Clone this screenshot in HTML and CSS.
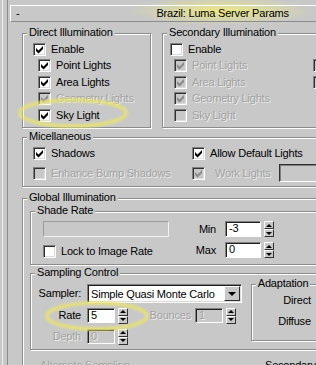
FILE: index.html
```html
<!DOCTYPE html>
<html lang="en">
<head>
    <meta charset="UTF-8">
    <title>Brazil: Luma Server Params</title>
    <link rel="stylesheet" href="styles.css">
</head>
<body>
    <div class="frame">
        <div class="rollout">
            <div class="roll-head">
                <span class="minus">-</span>
                <span class="roll-title">Brazil: Luma Server Params</span>
            </div>
            <div class="roll-body">
                <div class="illum">
                    <div class="group direct">
                        <div class="legend">Direct Illumination</div>
                        <div class="check-list">
                            <div class="chk"><span class="cb"><svg viewBox="0 0 11 11"><polygon points="2,4 4.5,6.5 9,2 9,5 4.5,9.5 2,7"/></svg></span><span class="lbl">Enable</span></div>
                            <div class="chk sub"><span class="cb"><svg viewBox="0 0 11 11"><polygon points="2,4 4.5,6.5 9,2 9,5 4.5,9.5 2,7"/></svg></span><span class="lbl">Point Lights</span></div>
                            <div class="chk sub"><span class="cb"><svg viewBox="0 0 11 11"><polygon points="2,4 4.5,6.5 9,2 9,5 4.5,9.5 2,7"/></svg></span><span class="lbl">Area Lights</span></div>
                            <div class="chk sub off"><span class="cb"><svg viewBox="0 0 11 11"><polygon points="2,4 4.5,6.5 9,2 9,5 4.5,9.5 2,7"/></svg></span><span class="lbl">Geometry Lights</span></div>
                            <div class="chk sub"><span class="cb"><svg viewBox="0 0 11 11"><polygon points="2,4 4.5,6.5 9,2 9,5 4.5,9.5 2,7"/></svg></span><span class="lbl">Sky Light</span></div>
                        </div>
                    </div>
                    <div class="group secondary">
                        <div class="legend">Secondary Illumination</div>
                        <div class="check-list">
                            <div class="chk"><span class="cb"></span><span class="lbl">Enable</span></div>
                            <div class="chk sub off"><span class="cb"><svg viewBox="0 0 11 11"><polygon points="2,4 4.5,6.5 9,2 9,5 4.5,9.5 2,7"/></svg></span><span class="lbl">Point Lights</span><span class="cb"></span></div>
                            <div class="chk sub off"><span class="cb"><svg viewBox="0 0 11 11"><polygon points="2,4 4.5,6.5 9,2 9,5 4.5,9.5 2,7"/></svg></span><span class="lbl">Area Lights</span><span class="cb"></span></div>
                            <div class="chk sub off"><span class="cb"><svg viewBox="0 0 11 11"><polygon points="2,4 4.5,6.5 9,2 9,5 4.5,9.5 2,7"/></svg></span><span class="lbl">Geometry Lights</span></div>
                            <div class="chk sub off"><span class="cb"></span><span class="lbl">Sky Light</span></div>
                        </div>
                    </div>
                </div>

                <div class="group misc">
                    <div class="legend">Micellaneous</div>
                    <div class="misc-grid">
                        <div class="chk"><span class="cb"><svg viewBox="0 0 11 11"><polygon points="2,4 4.5,6.5 9,2 9,5 4.5,9.5 2,7"/></svg></span><span class="lbl">Shadows</span></div>
                        <div class="chk"><span class="cb"><svg viewBox="0 0 11 11"><polygon points="2,4 4.5,6.5 9,2 9,5 4.5,9.5 2,7"/></svg></span><span class="lbl">Allow Default Lights</span></div>
                        <div class="chk off"><span class="cb"></span><span class="lbl">Enhance Bump Shadows</span></div>
                        <div class="chk off"><span class="cb"><svg viewBox="0 0 11 11"><polygon points="2,4 4.5,6.5 9,2 9,5 4.5,9.5 2,7"/></svg></span><span class="lbl work">Work Lights</span><span class="slot"></span></div>
                    </div>
                </div>

                <div class="group global">
                    <div class="legend">Global Illumination</div>

                    <div class="group shade">
                        <div class="legend">Shade Rate</div>
                        <div class="shade-row">
                            <div class="shade-left">
                                <div class="blank"></div>
                                <div class="chk lock"><span class="cb"></span><span class="lbl">Lock to Image Rate</span></div>
                            </div>
                            <div class="shade-right">
                                <div class="spin-row"><span class="lab">Min</span><span class="edit">-3</span><span class="spin"><i class="up"></i><i class="dn"></i></span></div>
                                <div class="spin-row"><span class="lab">Max</span><span class="edit">0</span><span class="spin"><i class="up"></i><i class="dn"></i></span></div>
                            </div>
                        </div>
                    </div>

                    <div class="group sampling">
                        <div class="legend">Sampling Control</div>
                        <div class="samp-body">
                            <div class="samp-left">
                                <div class="samp-row first">
                                    <span class="lab">Sampler:</span>
                                    <span class="combo"><span class="combo-text">Simple Quasi Monte Carlo</span><span class="combo-btn"></span></span>
                                </div>
                                <div class="samp-row">
                                    <span class="lab">Rate</span>
                                    <span class="edit small">5</span>
                                    <span class="spin"><i class="up"></i><i class="dn"></i></span>
                                    <span class="lab bounces off">Bounces</span>
                                    <span class="edit small off">1</span>
                                    <span class="spin"><i class="up"></i><i class="dn"></i></span>
                                </div>
                                <div class="samp-row last">
                                    <span class="lab off">Depth</span>
                                    <span class="edit small off">0</span>
                                    <span class="spin"><i class="up"></i><i class="dn"></i></span>
                                </div>
                            </div>
                            <div class="group adapt">
                                <div class="legend">Adaptation</div>
                                <div class="adapt-row">Direct</div>
                                <div class="adapt-row">Diffuse</div>
                            </div>
                        </div>
                    </div>

                    <div class="gi-foot">
                        <span class="foot-left off">Alternate Sampling</span>
                        <span>Secondary</span>
                    </div>
                </div>
            </div>
        </div>
    </div>

    <!-- yellow pen marks drawn over the dialog -->
    <svg class="marks" viewBox="0 0 316 365">
        <defs>
            <filter id="soft"><feGaussianBlur stdDeviation="1"/></filter>
        </defs>
        <ellipse cx="73" cy="113" rx="53" ry="13" fill="none" stroke="#ebe56c" stroke-width="4" opacity="0.75" filter="url(#soft)"/>
        <ellipse cx="97" cy="316" rx="50" ry="13" fill="none" stroke="#ebe56c" stroke-width="4" opacity="0.75" filter="url(#soft)"/>
    </svg>
</body>
</html>
```

FILE: styles.css
```css
* {
    box-sizing: border-box;
}
html, body {
    margin: 0;
}
body {
    width: 316px;
    height: 365px;
    overflow: hidden;
    position: relative;
    background: radial-gradient(ellipse 92px 14px at 222px 11px, rgba(238,234,128,0.95), rgba(238,234,128,0)), #c8c8c8;
    font: 11px/13px "Liberation Sans", Arial, sans-serif;
    letter-spacing: -0.2px;
    color: #000;
}
.frame {
    height: 365px;
    margin-left: 2px;
    border-left: 1px solid #ececec;
    padding-left: 4px;
}
.rollout {
    width: 400px;
    height: 100%;
    border-left: 1px solid #8c8c8c;
    padding: 5px 0 0 2px;
}
.roll-head {
    height: 17px;
    border-top: 1px solid #fff;
    border-left: 1px solid #fff;
    border-bottom: 1px solid #8c8c8c;
    display: flex;
    align-items: center;
    padding-left: 5px;
}
.roll-title {
    margin-left: 137px;
}
.roll-body {
    padding-left: 12px;
}

/* group boxes */
.group {
    border: 1px solid #8c8c8c;
    box-shadow: inset 1px 1px #fff, 1px 1px #fff;
}
.legend {
    width: max-content;
    height: 13px;
    margin: -8px 0 0 4px;
    padding: 0 2px;
    background: #c8c8c8;
}
.illum {
    display: flex;
    gap: 11px;
    margin-top: 11px;
}
.direct {
    width: 129px;
    height: 95px;
}
.secondary {
    width: 180px;
    height: 95px;
}
.check-list {
    margin: 2px 0 0 10px;
}
.secondary .check-list {
    margin-left: 7px;
}

/* checkboxes */
.chk {
    display: flex;
    align-items: center;
    height: 16.5px;
}
.chk.sub {
    padding-left: 5px;
}
.secondary .chk.sub {
    padding-left: 4px;
}
.secondary .lbl {
    width: 121px;
}
.cb {
    flex: none;
    width: 13px;
    height: 13px;
    margin-right: 5px;
    border: 1px solid;
    border-color: #808080 #fff #fff #808080;
    background: #fff;
    box-shadow: inset 1px 1px #303030, inset -1px -1px #dcdcdc;
}
.cb svg {
    display: block;
    width: 11px;
    height: 11px;
    fill: #000;
}
.off .cb {
    background: #c8c8c8;
}
.off .cb svg {
    fill: #8a8a8a;
}
.off .lbl, .lab.off, .off {
    color: #a2a2a2;
    text-shadow: 1px 1px 0 #ececec;
}

/* misc */
.misc {
    width: 320px;
    height: 50px;
    margin-top: 9px;
}
.misc-grid {
    display: grid;
    grid-template-columns: 159px auto;
    grid-auto-rows: 20px;
    margin-left: 10px;
}
.misc-grid .chk {
    height: 20px;
}
.lbl.work {
    margin-left: 5px;
}
.slot {
    width: 40px;
    height: 18px;
    margin-left: 8px;
    border: 1px solid;
    border-color: #303030 #fff #fff #303030;
    box-shadow: inset 1px 1px #808080;
}

/* global illumination */
.global {
    width: 320px;
    height: 200px;
    margin-top: 11px;
}
.shade {
    width: 300px;
    height: 54px;
    margin: 7px 0 0 7px;
}
.shade-row {
    display: flex;
    margin: 4px 0 0 12px;
}
.shade-left {
    width: 126px;
}
.blank {
    height: 16px;
    border: 1px solid;
    border-color: #9a9a9a #f2f2f2 #f2f2f2 #9a9a9a;
}
.chk.lock {
    height: 17px;
    margin-top: 6px;
}
.spin-row {
    display: flex;
    align-items: center;
    height: 16px;
}
.spin-row + .spin-row {
    margin-top: 5px;
}
.spin-row .lab {
    width: 47px;
    margin-right: 9px;
    text-align: right;
}
.edit {
    width: 36px;
    height: 16px;
    padding-left: 3px;
    border: 1px solid;
    border-color: #808080 #fff #fff #808080;
    background: #fff;
    box-shadow: inset 1px 1px #202020;
    line-height: 13px;
}
.edit.small {
    width: 28px;
    height: 15px;
    line-height: 12px;
}
.edit.off {
    background: #c8c8c8;
}
.spin {
    width: 10px;
    height: 16px;
    margin-left: 3px;
    display: flex;
    flex-direction: column;
}
.spin i {
    flex: 1;
    display: flex;
    align-items: center;
    justify-content: center;
    border: 1px solid;
    border-color: #fff #303030 #303030 #fff;
    background: #c8c8c8;
}
.spin i::before {
    content: "";
    border-left: 3px solid transparent;
    border-right: 3px solid transparent;
}
.spin .up::before {
    border-bottom: 3px solid #000;
}
.spin .dn::before {
    border-top: 3px solid #000;
}

/* sampling control */
.sampling {
    width: 300px;
    height: 77px;
    margin: 8px 0 0 7px;
}
.samp-body {
    display: flex;
}
.samp-left {
    width: 225px;
}
.samp-row {
    display: flex;
    align-items: center;
    height: 15px;
    margin-top: 5px;
}
.samp-row.first {
    height: 19px;
}
.samp-row.last {
    margin-top: 6px;
}
.samp-row .lab {
    width: 50px;
    margin-right: 6px;
    text-align: right;
}
.samp-row .lab.bounces {
    width: 48px;
    margin: 0 4px 0 15px;
}
.combo {
    width: 155px;
    height: 19px;
    display: flex;
    border: 1px solid;
    border-color: #808080 #fff #fff #808080;
    background: #fff;
    box-shadow: inset 1px 1px #202020, inset -1px -1px #dcdcdc;
    padding: 1px;
}
.combo-text {
    flex: 1;
    padding: 2px 0 0 2px;
}
.combo-btn {
    width: 16px;
    display: flex;
    align-items: center;
    justify-content: center;
    border: 1px solid;
    border-color: #fff #303030 #303030 #fff;
    background: #c8c8c8;
}
.combo-btn::before {
    content: "";
    border-left: 4px solid transparent;
    border-right: 4px solid transparent;
    border-top: 4px solid #000;
}
.adapt {
    width: 80px;
    height: 57px;
    margin-top: 5px;
}
.adapt-row {
    width: 59px;
    height: 21px;
    line-height: 21px;
    text-align: right;
}
.gi-foot {
    display: flex;
    margin: 9px 0 0 17px;
}
.foot-left {
    width: 225px;
}

.marks {
    position: absolute;
    top: 0;
    left: 0;
    width: 316px;
    height: 365px;
    pointer-events: none;
}
```
